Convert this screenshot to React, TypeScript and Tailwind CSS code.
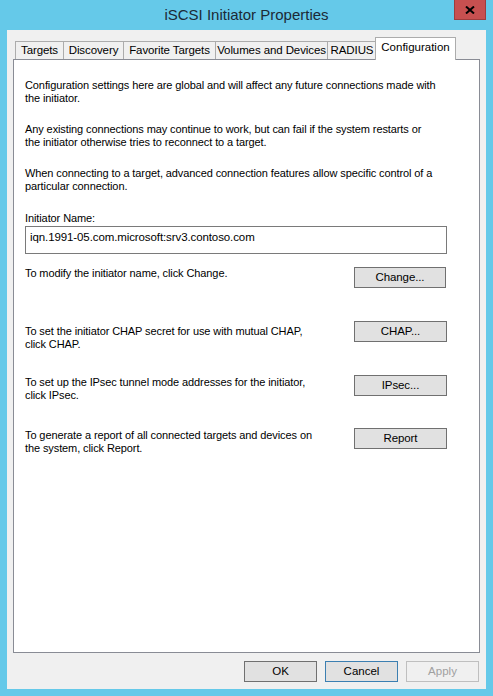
import React from 'react';

const font = { fontFamily: '"Liberation Sans", Arial, sans-serif' };

const tabs = [
  { label: 'Targets', w: 'w-[49px]' },
  { label: 'Discovery', w: 'w-[61px]' },
  { label: 'Favorite Targets', w: 'w-[93px]' },
  { label: 'Volumes and Devices', w: 'w-[113px]' },
  { label: 'RADIUS', w: 'w-[50px]' },
];

const Btn: React.FC<{ label: string; w?: string; extra?: string }> = ({ label, w = 'w-[93px]', extra = '' }) => (
  <button
    className={`${w} h-[21px] shrink-0 bg-[#e1e1e1] border border-[#707070] text-[11.5px] text-black leading-none ${extra}`}
  >
    {label}
  </button>
);

export default function App() {
  return (
    <div
      className="w-[493px] h-[696px] bg-[#65c9e9] flex flex-col text-black select-none"
      style={font}
    >
      {/* title bar */}
      <div className="relative h-[30px] shrink-0 flex items-center justify-center">
        <span className="text-[15px] text-[#1c2a36] mt-[1px]">iSCSI Initiator Properties</span>
        <div className="absolute right-[7px] top-0 w-[32px] h-[20px] bg-[#c75050] border-x border-b border-[#9e3d3d] flex items-center justify-center">
          <svg width="10" height="8" viewBox="0 0 10 8">
            <path d="M1 0.5 L9 7.5 M9 0.5 L1 7.5" stroke="#000" strokeWidth="2" />
          </svg>
        </div>
      </div>

      {/* client */}
      <div className="flex-1 mx-[7px] mb-[7px] bg-[#f0f0f0] flex flex-col px-[6px]">
        {/* tab strip */}
        <div className="flex items-end h-[29px] pl-[2px] relative z-10">
          {tabs.map((t, i) => (
            <div
              key={t.label}
              className={`${t.w} h-[18px] -mr-[1px] bg-[#f0f0f0] border border-b-0 border-[#acacac] text-[11.5px] tracking-[-0.1px] flex items-center justify-center leading-none whitespace-nowrap pt-[1px]`}
              style={{ zIndex: i }}
            >
              {t.label}
            </div>
          ))}
          <div className="w-[81px] h-[23px] -mb-[1px] -ml-[1px] bg-white border border-b-0 border-[#acacac] text-[11.5px] flex items-start justify-center pt-[4px] leading-none whitespace-nowrap relative z-20">
            Configuration
          </div>
        </div>

        {/* panel */}
        <div className="h-[594px] bg-white border border-[#898c95] pl-[11px] pr-[30px] pt-[19px] text-[11px] tracking-[-0.1px] leading-[13px] whitespace-nowrap">
          <p>
            Configuration settings here are global and will affect any future connections made with
            <br />
            the initiator.
          </p>
          <p className="mt-[18px]">
            Any existing connections may continue to work, but can fail if the system restarts or
            <br />
            the initiator otherwise tries to reconnect to a target.
          </p>
          <p className="mt-[18px]">
            When connecting to a target, advanced connection features allow specific control of a
            <br />
            particular connection.
          </p>
          <p className="mt-[19px]">Initiator Name:</p>
          <div className="mt-[1px] mr-[2px] h-[28px] border border-[#7a7a7a] pl-[4px] pt-[4px] text-[11.5px]">
            iqn.1991-05.com.microsoft:srv3.contoso.com
          </div>

          <div className="mt-[13px] flex justify-between items-start">
            <p>To modify the initiator name, click Change.</p>
            <Btn label="Change..." w="w-[92px]" extra="mr-[3px]" />
          </div>
          <div className="mt-[33px] flex justify-between items-start">
            <p className="mt-[4px]">
              To set the initiator CHAP secret for use with mutual CHAP,
              <br />
              click CHAP.
            </p>
            <Btn label="CHAP..." extra="mr-[2px]" />
          </div>
          <div className="mt-[24px] flex justify-between items-start">
            <p className="mt-[1px]">
              To set up the IPsec tunnel mode addresses for the initiator,
              <br />
              click IPsec.
            </p>
            <Btn label="IPsec..." extra="mr-[2px]" />
          </div>
          <div className="mt-[26px] flex justify-between items-start">
            <p className="mt-[1px]">
              To generate a report of all connected targets and devices on
              <br />
              the system, click Report.
            </p>
            <Btn label="Report" extra="mr-[2px]" />
          </div>
        </div>

        {/* bottom buttons */}
        <div className="mt-[8px] flex justify-end gap-[8px] pr-[1px]">
          <Btn label="OK" w="w-[73px]" />
          <Btn label="Cancel" w="w-[73px]" extra="!border-[#3c7fb1]" />
          <button className="w-[73px] h-[21px] bg-[#f0f0f0] border border-[#bfbfbf] text-[11.5px] text-[#a0a0a0] leading-none">
            Apply
          </button>
        </div>
      </div>
    </div>
  );
}
